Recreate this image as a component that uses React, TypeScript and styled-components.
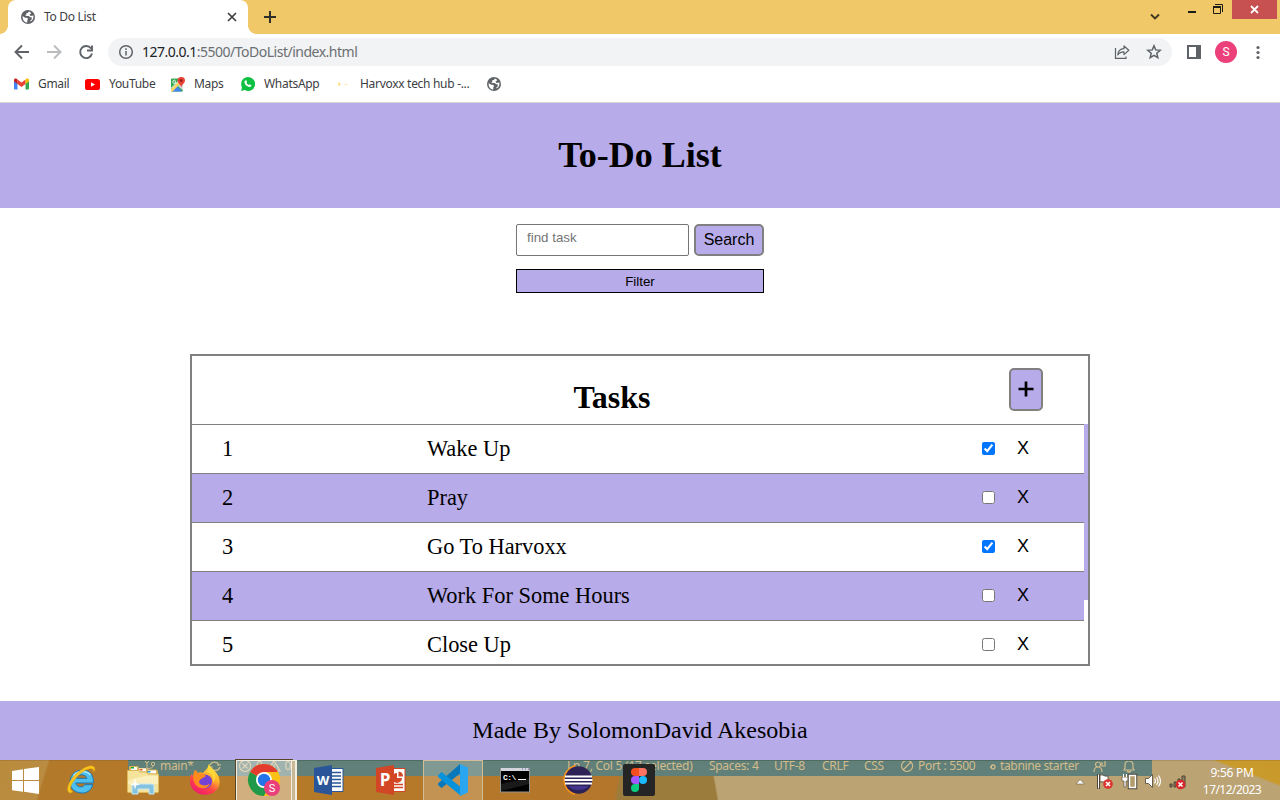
import React from "react";
import styled, { createGlobalStyle } from "styled-components";

const lilac = "#b7abe9";
const ui = `"Noto Sans", "Open Sans", sans-serif`;

const GlobalStyle = createGlobalStyle`
  * { box-sizing: border-box; }
  body { margin: 0; background: #fff; overflow: hidden; }
  svg { display: block; flex: none; }
`;

const Screen = styled.div`
  width: 1280px;
  height: 800px;
  display: flex;
  flex-direction: column;
  overflow: hidden;
  font-family: "Liberation Serif", serif;
  color: #000;
`;

/* Browser chrome */
const TabStrip = styled.div`
  height: 34px;
  flex: none;
  display: flex;
  background: #f0c868;
  padding-left: 8px;
`;
const Tab = styled.div`
  position: relative;
  width: 240px;
  height: 34px;
  display: flex;
  align-items: center;
  padding: 0 9px 0 13px;
  background: #fff;
  border-radius: 8px 8px 0 0;
  &::before, &::after {
    content: "";
    position: absolute;
    bottom: 0;
    width: 8px;
    height: 8px;
  }
  &::before { left: -8px; background: radial-gradient(circle at 0 0, transparent 7.5px, #fff 8px); }
  &::after { right: -8px; background: radial-gradient(circle at 100% 0, transparent 7.5px, #fff 8px); }
`;
const UiText = styled.span<{ $size?: number; $track?: number; $color?: string }>`
  font-family: ${ui};
  font-size: ${(p) => p.$size ?? 12}px;
  letter-spacing: ${(p) => p.$track ?? -0.3}px;
  color: ${(p) => p.$color ?? "#3c4043"};
  white-space: pre;
  line-height: 16px;
`;
const TabTitle = styled(UiText)`
  flex: 1;
  margin-left: 9px;
`;
const NewTab = styled.div`
  padding: 11px 0 0 16px;
  flex: 1;
`;
const ChevronSlot = styled.div`
  padding: 13px 28px 0 0;
`;
const WindowButtons = styled.div`
  display: flex;
  height: 19px;
  gap: 16px;
  margin-right: 3px;
`;
const CloseButton = styled.div`
  width: 45px;
  height: 19px;
  margin-left: -8px;
  background: #c75050;
  display: flex;
  align-items: center;
  justify-content: center;
`;
const Toolbar = styled.div`
  height: 36px;
  flex: none;
  display: flex;
  align-items: center;
  padding: 0 13px 0 14px;
`;
const NavButtons = styled.div`
  display: flex;
  gap: 16px;
  margin-right: 14px;
`;
const AddressBar = styled.div`
  width: 1064px;
  height: 28px;
  border-radius: 14px;
  background: #f1f3f4;
  display: flex;
  align-items: center;
  padding: 0 10px;
  margin-right: 15px;
`;
const AddressActions = styled.div`
  display: flex;
  gap: 16px;
`;
const Url = styled(UiText)`
  flex: 1;
  margin-left: 8px;
  b { font-weight: 400; color: #202124; }
`;
const Avatar = styled.div`
  width: 22px;
  height: 22px;
  border-radius: 50%;
  margin: 0 13px 0 14px;
  background: #ec407a;
  color: #fff;
  font: 12px/22px Roboto, sans-serif;
  text-align: center;
`;
const BookmarkBar = styled.div`
  height: 33px;
  flex: none;
  display: flex;
  align-items: center;
  padding: 0 0 4px 14px;
  border-bottom: 1px solid #d6d8d6;
`;
const Bookmark = styled.div<{ $width: number }>`
  width: ${(p) => p.$width}px;
  display: flex;
  align-items: center;
  gap: 9px;
`;

/* To-do page */
const PageHeader = styled.header`
  height: 105px;
  flex: none;
  background: ${lilac};
  text-align: center;
`;
const PageTitle = styled.h1`
  margin: 0;
  padding-top: 31px;
  font-size: 36px;
  line-height: 42px;
`;
const SearchArea = styled.section`
  width: 248px;
  margin: 16px auto 0;
  flex: none;
`;
const SearchRow = styled.div`
  display: flex;
  gap: 5px;
`;
const SearchInput = styled.input`
  width: 173px;
  height: 32px;
  border: 1px solid #767676;
  border-radius: 2px;
  padding: 0 10px 5px;
  font: 13.33px "Liberation Sans", Arial, sans-serif;
  &::placeholder { color: #757575; }
`;
const SearchButton = styled.button`
  width: 70px;
  height: 32px;
  padding: 0;
  background: ${lilac};
  border: 2px solid gray;
  border-radius: 5px;
  font: 16px "Liberation Sans", Arial, sans-serif;
  color: #000;
`;
const FilterButton = styled.button`
  display: block;
  width: 248px;
  height: 24px;
  margin-top: 13px;
  padding: 0;
  background: ${lilac};
  border: 1px solid #000;
  font: 13.33px "Liberation Sans", Arial, sans-serif;
  color: #000;
`;
const TaskBox = styled.section`
  width: 900px;
  height: 312px;
  flex: none;
  margin: 61px auto 0;
  border: 2px solid gray;
  overflow: hidden;
`;
const TaskHeader = styled.div`
  height: 68px;
  display: grid;
  grid-template-columns: 817px 34px;
`;
const TaskHeading = styled.h2`
  margin: 0;
  padding: 22px 0 0 23px;
  text-align: center;
  font-size: 32px;
  line-height: 38px;
`;
const AddButton = styled.button`
  width: 34px;
  height: 43px;
  margin-top: 12px;
  padding: 0;
  display: flex;
  justify-content: center;
  align-items: center;
  background: ${lilac};
  border: 2px solid gray;
  border-radius: 5px;
`;
const TaskScroll = styled.div`
  display: flex;
`;
const TaskRows = styled.div`
  width: 892px;
`;
const ScrollThumb = styled.div`
  width: 4px;
  height: 176px;
  background: ${lilac};
`;
const TaskRow = styled.div<{ $shaded: boolean }>`
  height: 49px;
  border-top: 1px solid gray;
  background: ${(p) => (p.$shaded ? lilac : "#fff")};
  display: grid;
  grid-template-columns: 205px 555px 35px 30px;
  align-items: center;
  padding-left: 30px;
  font-size: 22.4px;
`;
const Check = styled.input`
  width: 13px;
  height: 13px;
  margin: 0 0 1px;
`;
const Remove = styled.span`
  font: 18px "Liberation Sans", Arial, sans-serif;
  padding-bottom: 2px;
`;
const PageFooter = styled.footer`
  height: 59px;
  margin-top: 35px;
  flex: none;
  background: ${lilac};
  text-align: center;
  font-size: 24px;
  line-height: 59px;
`;

/* Desktop taskbar */
const TaskbarRoot = styled.div`
  position: relative;
  height: 40px;
  flex: none;
  display: flex;
  background:
    linear-gradient(#5a401855 0, transparent 1px),
    linear-gradient(21deg, transparent 66%, #c99a2c 69%, #c9982a 100%) right / 100px 40px no-repeat,
    linear-gradient(80deg, transparent 706px, #bba374 708px),
    linear-gradient(100deg, transparent 611px, #9b7c3d 615px),
    linear-gradient(107deg, #b88b3c 0, #ba8c42 46px, #b3792a 48px, #b57a28 300px, #b4762b 615px);
`;
const GhostStatus = styled.div`
  position: absolute;
  left: 128px;
  top: 0;
  width: 1024px;
  height: 16px;
  background: #618079;
  border-top: 1px solid #506c60;
  overflow: hidden;
  display: flex;
  align-items: center;
  padding: 0 0 5px 16px;
  color: #d3bc8b;
`;
const GhostItem = styled.div<{ $width: number }>`
  width: ${(p) => p.$width}px;
  flex: none;
  display: flex;
  align-items: center;
  gap: 4px;
  height: 12px;
`;
const AppSlots = styled.div`
  position: relative;
  display: flex;
  flex: 1;
`;
const StartSlot = styled.div`
  width: 50px;
  height: 40px;
  display: flex;
  align-items: center;
  justify-content: center;
`;
const Slot = styled.div<{ $frame?: "dim" | "stack" }>`
  width: 62px;
  height: 40px;
  display: flex;
  align-items: center;
  justify-content: center;
  padding-right: ${(p) => (p.$frame === "stack" ? 6 : 0)}px;
  &::before {
    content: "";
    display: ${(p) => (p.$frame ? "block" : "none")};
    position: absolute;
    width: ${(p) => (p.$frame === "stack" ? 54 : 58)}px;
    height: 39px;
    border: 1px solid ${(p) => (p.$frame === "stack" ? "#f4eee0" : "#d2bd94")};
    background: ${(p) => (p.$frame === "stack" ? "#ffffff66" : "#ffffff33")};
    box-shadow: ${(p) => (p.$frame === "stack" ? "4px 0 0 -1px #c8b896, 5px 0 0 0 #f4eee0, 0 0 0 1px #57452b" : "none")};
  }
  svg { position: relative; }
`;
const Tray = styled.div`
  position: relative;
  width: 204px;
  display: flex;
`;
const TrayIcons = styled.div`
  width: 112px;
  padding-top: 13px;
`;
const Clock = styled.div`
  width: 88px;
  display: flex;
  flex-direction: column;
  align-items: center;
  padding: 4px 0 0;
`;
const ClockText = styled(UiText)`
  line-height: 17px;
  color: #fff;
`;

const Globe = () => (
  <svg width="14" height="14" viewBox="0 0 14 14">
    <circle cx="7" cy="7" r="7" fill="#5f6368" />
    <path d="M1.7 6 4 7.8h2.2l.8 1.3-.7 1.1v2.4C3.5 12.5 1.3 10.1 1.7 6ZM7.8 1.6 7 3H5.4v1.500L4.200 5.200l1.300.8h2.300l1.300 1.300h1.600v2.200l-1.400 1 .4.900c2-.8 3.200-3.400 2.700-5.800l-2.800.3-1.100-1.200 1.700-1.500C9.600 2.300 8.700 1.800 7.800 1.600Z" fill="#fff" />
  </svg>
);
const Line = ({ d, w = 14, h = 14, color = "#5f6368", sw = 2 }: { d: string; w?: number; h?: number; color?: string; sw?: number }) => (
  <svg width={w} height={h} viewBox={`0 0 ${w} ${h}`} fill="none" stroke={color} strokeWidth={sw}>
    <path d={d} />
  </svg>
);
const Info = () => (
  <svg width="16" height="16" viewBox="0 0 16 16" fill="none" stroke="#5f6368" strokeWidth="1.5">
    <circle cx="8" cy="8" r="6.3" />
    <path d="M8 7v4.5M8 4.3V6" />
  </svg>
);
const Gmail = () => (
  <svg width="15" height="12" viewBox="0 0 15 12">
    <path d="M0 1.8 3.5 4v7.5H1a1 1 0 0 1-1-1Z" fill="#4285f4" />
    <path d="M11.5 4 15 1.8v8.7a1 1 0 0 1-1 1h-2.5Z" fill="#34a853" />
    <path d="M3.5 1.5 7.5 4.6l4-3.1V6l-4 3-4-3Z" fill="#ea4335" />
    <path d="M0 2C0 .3 1.7 0 2.6.8l.9.7V6L0 3.5Z" fill="#c5221f" />
    <path d="M15 2c0-1.7-1.7-2-2.6-1.2l-.9.7V6L15 3.5Z" fill="#fbbc04" />
  </svg>
);
const YouTube = () => (
  <svg width="15" height="11" viewBox="0 0 15 11">
    <rect width="15" height="11" rx="2.6" fill="#f00" />
    <path d="m6 3.2 4 2.3-4 2.3Z" fill="#fff" />
  </svg>
);
const Maps = () => (
  <svg width="15" height="15" viewBox="0 0 15 15">
    <rect x="1" y="1.500" width="12" height="13" rx="1" fill="#34a853" />
    <path d="m2 14.500 5-5.500 5 5.500Z" fill="#4285f4" />
    <path d="m8 9 5-5v9.500Z" fill="#dadce0" />
    <path d="m1 12 9-9 2 2-9.500 9.500H1Z" fill="#fdd663" />
    <path d="m1 11.500 9-9" stroke="#fff" />
    <path d="M6 4.900H4.500M6 5a1.600 1.600 0 1 1-.4-1.200" stroke="#fff" fill="none" strokeWidth=".9" />
    <path d="M11.200 0A3.700 3.700 0 0 1 15 3.700c0 2.300-3 3.500-3.800 6.600-.8-3.100-3.700-4.300-3.700-6.600A3.700 3.700 0 0 1 11.200 0Z" fill="#ea4335" />
    <circle cx="11.200" cy="3.600" r="1.300" fill="#8c1d18" />
  </svg>
);
const WhatsApp = () => (
  <svg width="14" height="14" viewBox="0 0 14 14">
    <path d="M7 0a7 7 0 1 1-3.300 13.100L0 14l1-3.600A7 7 0 0 1 7 0Z" fill="#0fc143" />
    <path d="M4.700 3.300c.7-.2.8.2 1.300 1.600.1.400-.600.800-.4 1.100.5.900 1.200 1.600 2.300 2.100.4.100.700-.9 1.100-.7 1.500.7 1.600.8 1.400 1.400-.4 1.100-1.700 1.400-2.800 1C5.300 9 4 7.700 3.500 5.800c-.2-.9.200-2.100 1.200-2.500Z" fill="#fff" />
  </svg>
);
const HarvoxxMark = () => (
  <svg width="14" height="14" viewBox="0 0 14 14">
    <path d="M1 8.500V7l1-2 1.500 2v1.500Z" fill="#ffe082" />
    <path d="M7.500 7.500h3" stroke="#ffe9a8" />
  </svg>
);
const Share = () => (
  <svg width="16" height="16" viewBox="0 0 16 16" fill="none" stroke="#5f6368" strokeWidth="1.200">
    <path d="M1.500 4v10.400h10.500v-2" />
    <path d="M10 2v2.600C6 4.800 4 7 3.800 11c1.600-2.400 3.300-3.100 6.200-3.100v2.700l4.800-4.300Z" strokeLinejoin="round" />
  </svg>
);
const Star = () => (
  <svg width="16" height="16" viewBox="0 0 16 16" fill="none" stroke="#5f6368" strokeWidth="1.500">
    <path d="m8 1.800 1.700 4.100 4.500.4-3.400 2.900 1 4.400L8 11.300l-3.800 2.300 1-4.400-3.400-2.900 4.500-.4Z" />
  </svg>
);
const SidePanel = () => (
  <svg width="14" height="14" viewBox="0 0 14 14">
    <path d="M0 0h14v14H0Zm2 2v10h7V2Z" fill="#5f6368" fillRule="evenodd" />
  </svg>
);
const Dots = () => (
  <svg width="16" height="16" viewBox="0 0 16 16" fill="#5f6368">
    <circle cx="8" cy="3.500" r="1.600" /><circle cx="8" cy="8.500" r="1.600" /><circle cx="8" cy="13.500" r="1.600" />
  </svg>
);

const StartLogo = () => (
  <svg width="27" height="27" viewBox="0 0 27 27" fill="#fff">
    <path d="m0 4 11-1.700V13H0ZM12 2.100 27 0v13H12ZM0 14h11v10.700L0 23.200ZM12 14h15v13l-15-2.200Z" />
  </svg>
);
const Explorer = () => (
  <svg width="32" height="32" viewBox="0 0 32 32">
    <path d="M28.300 19H10.800c.5 4 6.500 5.500 9 1.700h8C26 27 21 29.500 16 29 9 28.500 4.500 23.500 5 17.500 5.500 10.500 11 6 17.500 6 24.500 6 29 11 28.300 19ZM11.300 14.300h10.500c-.9-4.600-9-4.600-10.500 0Z" fill="#4dc0f0" stroke="#1976b5" />
    <path d="M8.500 12C12 6.500 21 6 25.500 11" fill="none" stroke="#a9e8ff" strokeWidth="1.500" />
    <path d="M5 29c-5-1.500-2-11 5-18S27-1 29.500 3.500c.7 1.500.3 3.200-.6 4.500C29 2.500 21 4 13.500 11.500S3 26 8 27.500c-1 1-2 1.500-3 1.500Z" fill="#fcc51b" stroke="#d79a12" strokeWidth=".5" />
  </svg>
);
const Folder = () => (
  <svg width="32" height="30" viewBox="0 0 32 30">
    <path d="M2 2q0-1 1-1h8l1 2h7l1 1.500h9q2 0 2 2V20H2Z" fill="#d7b351" />
    <path d="M4 2h6v3H4ZM12 3.500h7v3h-7ZM21 5.500h8v3h-8Z" fill="#fff" />
    <path d="M4 2h3v1.500H4Z" fill="#13a538" /><path d="M12.500 4h3v1.500h-3Z" fill="#e35a1d" /><path d="M20.500 6h3v1.500h-3Z" fill="#239be0" />
    <path d="M.5 5.500H11L13 7h6l2 2h10.500v17.500q0 1-1 1h-29q-1 0-1-1Z" fill="#f5e39c" stroke="#dbb958" />
    <path d="M1 16q12-6 30-5v8H1Z" fill="#fbefbd" />
    <path d="M5 29v-8q0-2 2-2h18q2 0 2 2v8h-5v-5H11v5Z" fill="#84c2df" stroke="#c8eaf5" />
    <path d="m8 13 1 5 4 1.500-4 1L8 25l-1-4.500-4-1L7 18Z" fill="#fff" />
  </svg>
);
const Firefox = () => (
  <svg width="32" height="32" viewBox="0 0 32 32">
    <defs>
      <linearGradient id="fx" x1=".8" y1="0" x2=".2" y2="1">
        <stop offset="0" stopColor="#fff044" /><stop offset=".35" stopColor="#ffb52b" /><stop offset=".65" stopColor="#ff4545" /><stop offset="1" stopColor="#ed1277" />
      </linearGradient>
    </defs>
    <path d="M20 0c1 4 5 5 7.500 9 5 7 3.500 14-1 18-5 5-15 5-20 .5C0 23 0 15 2.500 10L4 12l2-6 3 3c2-1 3-1 5 0 2-3 5-4 6-9Z" fill="url(#fx)" />
    <circle cx="16" cy="17.500" r="7" fill="#7542d6" />
    <path d="M6 6c2 1 2 3 4 4 3-1 5 0 7 2l-5 3c-3 2-2 5 1 6s5 0 8-1c-2 5-10 6-14 1C4 18 3 11 6 6Z" fill="#ff8a1d" />
    <path d="M18 8c5 1 7 5 6 11 3-4 3-8 0-12-2-2-3-4-4-7-1 3-1 5-2 8Z" fill="#ffd83b" />
  </svg>
);
const Chrome = () => (
  <svg width="34" height="34" viewBox="0 0 34 34">
    <circle cx="17" cy="17" r="16" fill="#fbc116" />
    <path d="M17 17 3.100 9A16 16 0 0 1 30.900 9Z" fill="#e33b2e" />
    <path d="M17 17 3.100 9A16 16 0 0 0 17 33l7-12Z" fill="#209a4a" />
    <path d="M17 9h13.900A16 16 0 0 1 17 33l7-12Z" fill="#fbc116" />
    <circle cx="17" cy="17" r="8" fill="#fff" /><circle cx="17" cy="17" r="6.200" fill="#2374e8" />
    <circle cx="25" cy="25" r="8" fill="#e93f7b" />
    <text x="25" y="29" fill="#fff" fontSize="11" textAnchor="middle" fontFamily="Roboto, sans-serif">S</text>
  </svg>
);
const Office = ({ letter, color }: { letter: string; color: string }) => (
  <svg width="30" height="30" viewBox="0 0 30 30">
    <path d="M15 3.500h14v23H15Z" fill="#fff" stroke={color} />
    {letter === "W" ? (
      <path d="M17 7.500h10M17 11h10M17 14.500h10M17 18h10M17 21.500h10" stroke={color} strokeWidth="1.500" />
    ) : (
      <>
        <path d="M21 8v5h5a5 5 0 1 1-5-5Z" fill={color} /><path d="M22.500 6.500a5 5 0 0 1 4.500 5h-4.500Z" fill={color} />
        <path d="M18 19.500h9M18 22.500h9" stroke={color} strokeWidth="1.500" />
      </>
    )}
    <path d="m0 3 18-3v30L0 27Z" fill={color} />
    <text x="9" y={letter === "W" ? 20 : 21} fill="#fff" fontSize={letter === "W" ? 13 : 17} fontWeight="700" textAnchor="middle" fontFamily="Open Sans, sans-serif">{letter}</text>
  </svg>
);
const Code = () => (
  <svg width="32" height="32" viewBox="0 0 32 32">
    <path d="M1 19.500 23 0l2 8L4.500 24 1 21Z" fill="#0878ba" />
    <path d="M1 11.500 4.500 8 25 24l-1 8L1 13Z" fill="#0992dc" />
    <path d="M23 0l8 3.500v25L23 32Z" fill="#2aa5f0" />
  </svg>
);
const Terminal = () => (
  <svg width="30" height="26" viewBox="0 0 30 26">
    <rect x=".5" y="1.500" width="29" height="23.500" fill="#000" stroke="#96948e" />
    <path d="M1 1h28v3H1Z" fill="#d4d5dc" /><path d="M22 2h1m2 0h1m2 0h1" stroke="#5267a8" />
    <path d="M1 17 29 11v6L1 24Z" fill="#333" opacity=".5" />
    <text x="3" y="12.500" fill="#fff" fontSize="8" fontWeight="700" letterSpacing="-.5" fontFamily="Liberation Mono, monospace">C:\</text>
    <path d="M18 12.500h8" stroke="#fff" />
  </svg>
);
const Eclipse = () => (
  <svg width="34" height="32" viewBox="0 0 34 32">
    <path d="M15 2a14.500 14.500 0 0 0 0 28c-12-6-12-22 0-28Z" fill="#f7941e" stroke="#f7941e" strokeWidth="2" />
    <circle cx="18.500" cy="16" r="13.700" fill="#2c2255" />
    <path d="M8 22a13 10 0 0 0 21 0Z" fill="#42358b" />
    <path d="M5 12.500h27M4.500 16h28M5 19.500h27" stroke="#fff" strokeWidth="1.800" />
  </svg>
);
const Figma = () => (
  <svg width="32" height="32" viewBox="0 0 32 32">
    <rect width="32" height="32" rx="2" fill="#252525" />
    <path d="M16 4h-4a4 4 0 0 0 0 8h4Z" fill="#f24e1e" /><path d="M16 4h4a4 4 0 0 1 0 8h-4Z" fill="#ff7262" />
    <path d="M16 12h-4a4 4 0 0 0 0 8h4Z" fill="#a259ff" /><circle cx="20" cy="16" r="4" fill="#1abcfe" />
    <path d="M16 20h-4a4 4 0 1 0 4 4Z" fill="#0acf83" />
  </svg>
);
const TrayArt = () => (
  <svg width="112" height="17" viewBox="0 0 112 17">
    <path d="M0 11 4 6.500 8.500 11Z" fill="#fff" stroke="#6c604b" strokeWidth=".6" />
    <path d="M22.500 1v15" stroke="#4b4437" strokeWidth="3" /><path d="M22.500 1.500v14" stroke="#fff" />
    <path d="M24 2c3-1 4 2 8 1v6c-4 1-5-1-8 0Z" fill="#fff" stroke="#4b4437" strokeWidth=".8" />
    <circle cx="32" cy="11" r="4.800" fill="#db332d" /><path d="m30 9 4 4m0-4-4 4" stroke="#fff" strokeWidth="1.600" />
    <path d="M46 4h6v4h-2v6h-2V8h-2Z" fill="#fff" stroke="#4b4437" strokeWidth=".6" />
    <path d="M47.500 1v3M50.500 1v3" stroke="#fff" />
    <rect x="53.500" y="2.500" width="6" height="12" fill="none" stroke="#4b4437" strokeWidth="3.500" /><rect x="53.500" y="2.500" width="6" height="12" fill="#b49b6c" stroke="#fff" strokeWidth="1.500" />
    <path d="M69.500 5.500h3l4-4v13l-4-4h-3Z" fill="#fff" stroke="#4b4437" strokeWidth=".8" />
    <path d="M78.500 5.500q2 2.500 0 5M80.500 4q3 4 0 8M82.500 2.500q4 5.500 0 11" fill="none" stroke="#fff" strokeWidth="1.200" />
    <path d="M94 11h2v3h-2ZM98 9h2v5h-2ZM102 6h2v8h-2ZM106 3h3v11h-3Z" fill="#8d7d60" stroke="#4b4437" />
    <circle cx="104.500" cy="11.500" r="4.800" fill="#d9262b" /><path d="m102.500 9.500 4 4m0-4-4 4" stroke="#fff" strokeWidth="1.600" />
  </svg>
);

const tasks = [
  { text: "Wake Up", done: true },
  { text: "Pray", done: false },
  { text: "Go To Harvoxx", done: true },
  { text: "Work For Some Hours", done: false },
  { text: "Close Up", done: false },
];

const ghost = "#d3bc8b";
const statusItems = [
  { text: "Spaces: 4", width: 65 },
  { text: "UTF-8", width: 48 },
  { text: "CRLF", width: 42 },
  { text: "CSS", width: 36 },
];

const BrowserChrome = () => (
  <>
    <TabStrip>
      <Tab>
        <Globe />
        <TabTitle>To Do List</TabTitle>
        <Line d="m3 3 8 8M11 3 3 11" color="#3c4043" sw={1.700} />
      </Tab>
      <NewTab><Line d="M6 0v12M0 6h12" w={12} h={12} color="#2f2e29" /></NewTab>
      <ChevronSlot><Line d="m1 1.500 4 4 4-4" w={10} h={8} color="#3d3520" sw={1.800} /></ChevronSlot>
      <WindowButtons>
        <Line d="M0 12h8" w={9} h={18} color="#1d1b16" />
        <svg width="11" height="18" viewBox="0 0 11 18" fill="none" stroke="#1d1b16">
          <path d="M.5 6.500h7v7h-7Z" /><path d="M0 7h8" strokeWidth="2" /><path d="M2 4.500h7.500V12" />
        </svg>
        <CloseButton><Line d="m1 1 7 7M8 1 1 8" w={9} h={9} color="#fff" sw={1.800} /></CloseButton>
      </WindowButtons>
    </TabStrip>
    <Toolbar>
      <NavButtons>
        <Line w={16} h={16} d="M15 8H2M8 1.500 1.500 8 8 14.500" sw={1.900} />
        <Line w={16} h={16} d="M1 8h13M8 1.500 14.500 8 8 14.500" sw={1.900} color="#babcbe" />
        <Line w={16} h={16} d="M13 4.500A6 6 0 1 0 14 9.500M14 1.500V6.500H9" sw={1.900} />
      </NavButtons>
      <AddressBar>
        <Info />
        <Url $size={14} $track={-0.5} $color="#6b6f73"><b>127.0.0.1</b>:5500/ToDoList/index.html</Url>
        <AddressActions><Share /><Star /></AddressActions>
      </AddressBar>
      <SidePanel />
      <Avatar>S</Avatar>
      <Dots />
    </Toolbar>
    <BookmarkBar>
      <Bookmark $width={71}><Gmail /><UiText>Gmail</UiText></Bookmark>
      <Bookmark $width={85}><YouTube /><UiText>YouTube</UiText></Bookmark>
      <Bookmark $width={71}><Maps /><UiText>Maps</UiText></Bookmark>
      <Bookmark $width={96}><WhatsApp /><UiText>WhatsApp</UiText></Bookmark>
      <Bookmark $width={150}><HarvoxxMark /><UiText>Harvoxx tech hub -...</UiText></Bookmark>
      <Globe />
    </BookmarkBar>
  </>
);

const TodoPage = () => (
  <>
    <PageHeader><PageTitle>To-Do List</PageTitle></PageHeader>
    <SearchArea>
      <SearchRow>
        <SearchInput placeholder="find task" />
        <SearchButton>Search</SearchButton>
      </SearchRow>
      <FilterButton>Filter</FilterButton>
    </SearchArea>
    <TaskBox>
      <TaskHeader>
        <TaskHeading>Tasks</TaskHeading>
        <AddButton><Line d="M8 .5v15M.5 8h15" w={16} h={18} sw={2.700} color="#000" /></AddButton>
      </TaskHeader>
      <TaskScroll>
        <TaskRows>
          {tasks.map((task, i) => (
            <TaskRow key={task.text} $shaded={i % 2 === 1}>
              <span>{i + 1}</span>
              <span>{task.text}</span>
              <Check type="checkbox" defaultChecked={task.done} />
              <Remove>X</Remove>
            </TaskRow>
          ))}
        </TaskRows>
        <ScrollThumb />
      </TaskScroll>
    </TaskBox>
    <PageFooter>Made By SolomonDavid Akesobia</PageFooter>
  </>
);

const Taskbar = () => (
  <TaskbarRoot>
    <GhostStatus>
      <GhostItem $width={64}>
        <svg width="12" height="14" viewBox="0 0 12 14" fill="none" stroke={ghost}><circle cx="3" cy="2" r="1.700" /><circle cx="9" cy="5" r="1.700" /><path d="M3 4v6M9 7q0 2.500-6 2.500" /><circle cx="3" cy="12" r="1.500" /></svg>
        <UiText $color={ghost}>main*</UiText>
      </GhostItem>
      <GhostItem $width={30}><Line d="M2 6a5 5 0 0 1 9 0M12 8a5 5 0 0 1-9 1M9 6h4M1 8h4" color={ghost} sw={1.200} /></GhostItem>
      <GhostItem $width={185}>
        <Line d="M7 1.500a5.500 5.500 0 1 0 .1 0M4.500 4.500l5 5m0-5-5 5" color={ghost} sw={1.200} />
        <UiText $color={ghost}>0</UiText>
        <Line d="M7 1.500 1 12h12ZM7 5v4" color={ghost} sw={1.200} />
        <UiText $color={ghost}>0</UiText>
      </GhostItem>
      <GhostItem $width={144} />
      <GhostItem $width={142}><UiText $color={ghost} $track={-0.25}>Ln 7, Col 5 (17 selected)</UiText></GhostItem>
      {statusItems.map((s) => (
        <GhostItem key={s.text} $width={s.width}><UiText $color={ghost}>{s.text}</UiText></GhostItem>
      ))}
      <GhostItem $width={90}><Line d="M7 1.500a5.500 5.500 0 1 0 .1 0M3 11 11 3" color={ghost} sw={1.200} /><UiText $color={ghost}>Port : 5500</UiText></GhostItem>
      <GhostItem $width={102}><Line d="M3 3a2 2 0 1 0 .1 0M0 5h2" w={6} h={9} color={ghost} sw={1.300} /><UiText $color={ghost} $track={-0.35}>tabnine starter</UiText></GhostItem>
      <GhostItem $width={30}><Line d="M6 3a2.500 2.500 0 1 0 .1 0M2 13q0-5 4-5t4 5M10 3v4h3V2" color={ghost} sw={1.200} /></GhostItem>
      <GhostItem $width={16}><Line d="M2 11h10L11 9V6q0-4-4-4T3 6v3ZM5 12q2 2 4 0" color={ghost} sw={1.200} /></GhostItem>
    </GhostStatus>
    <AppSlots>
      <StartSlot><StartLogo /></StartSlot>
      <Slot><Explorer /></Slot>
      <Slot><Folder /></Slot>
      <Slot><Firefox /></Slot>
      <Slot $frame="stack"><Chrome /></Slot>
      <Slot><Office letter="W" color="#2a5699" /></Slot>
      <Slot><Office letter="P" color="#d24625" /></Slot>
      <Slot $frame="dim"><Code /></Slot>
      <Slot><Terminal /></Slot>
      <Slot><Eclipse /></Slot>
      <Slot><Figma /></Slot>
    </AppSlots>
    <Tray>
      <TrayIcons><TrayArt /></TrayIcons>
      <Clock><ClockText>9:56 PM</ClockText><ClockText $track={-0.55}>17/12/2023</ClockText></Clock>
    </Tray>
  </TaskbarRoot>
);

export default function App() {
  return (
    <Screen>
      <GlobalStyle />
      <BrowserChrome />
      <TodoPage />
      <Taskbar />
    </Screen>
  );
}
